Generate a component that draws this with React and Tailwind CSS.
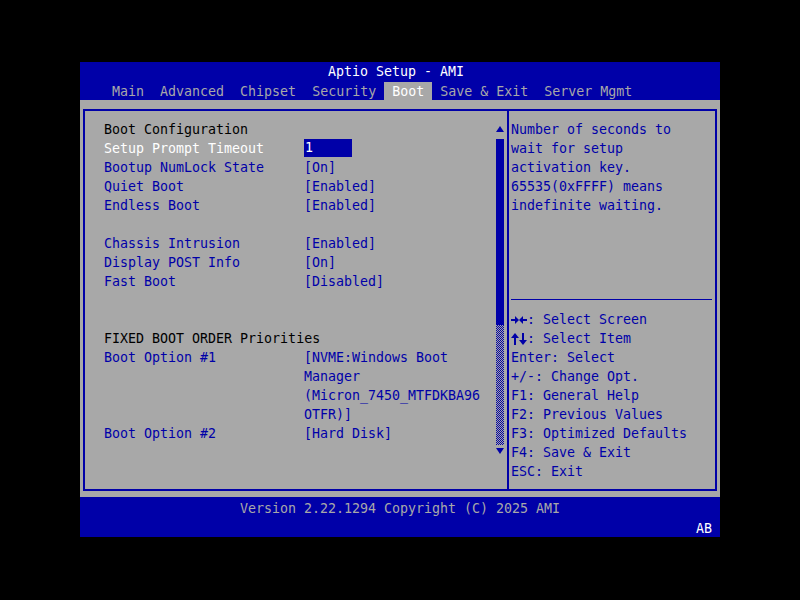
import React from "react";

const B = "#0000a8";

function Row({ label, value, labelClass = "text-[#0000a8]", valueNode }) {
  return (
    <div className="flex h-[19px] leading-[19px]">
      <div className={"w-[200px] whitespace-pre " + labelClass}>{label}</div>
      <div className="whitespace-pre text-[#0000a8]">{valueNode || value}</div>
    </div>
  );
}

function Blank() {
  return <div className="h-[19px]" />;
}

function LRArrows() {
  return (
    <svg width="16" height="19" viewBox="0 0 16 19" className="shrink-0">
      <rect x="0" y="9" width="5" height="2" fill={B} />
      <polygon points="4,6 8,10 4,14" fill={B} />
      <rect x="11" y="9" width="5" height="2" fill={B} />
      <polygon points="12,6 8,10 12,14" fill={B} />
    </svg>
  );
}

function UDArrows() {
  return (
    <svg width="16" height="19" viewBox="0 0 16 19" className="shrink-0">
      <polygon points="4,4 0,9 8,9" fill={B} />
      <rect x="3" y="8" width="2" height="8" fill={B} />
      <polygon points="12,16 8,11 16,11" fill={B} />
      <rect x="11" y="4" width="2" height="8" fill={B} />
    </svg>
  );
}

export default function App() {
  const tabs = ["Main", "Advanced", "Chipset", "Security", "Boot", "Save & Exit", "Server Mgmt"];
  return (
    <div className="w-[800px] h-[600px] bg-black pt-[62px] pl-[80px] font-['DejaVu_Sans_Mono',monospace] text-[13.3px]">
      <div className="w-[640px] h-[475px] flex flex-col">
        {/* Header */}
        <div className="bg-[#0000a8] h-[38px] shrink-0">
          <div className="h-[20px] leading-[20px] pl-[248px] text-white whitespace-pre">Aptio Setup - AMI</div>
          <div className="h-[18px] flex pl-[24px] leading-[20px]">
            {tabs.map((t) => (
              <div
                key={t}
                className={
                  "px-[8px] whitespace-pre " +
                  (t === "Boot" ? "bg-[#a8a8a8] text-white" : "text-[#a8a8a8]")
                }
              >
                {t}
              </div>
            ))}
          </div>
        </div>

        {/* Body */}
        <div className="bg-[#a8a8a8] h-[397px] pt-[9px] px-[3px] shrink-0">
          <div className="border-2 border-[#0000a8] h-[382px] flex">
            {/* Left pane */}
            <div className="w-[422px] flex shrink-0">
              <div className="flex-1 pl-[19px] pt-[9px]">
                <Row label="Boot Configuration" labelClass="text-black" value="" />
                <Row
                  label="Setup Prompt Timeout"
                  labelClass="text-white"
                  valueNode={
                    <div className="w-[48px] h-[18px] leading-[18px] bg-[#0000a8] text-white pl-[1px]">1</div>
                  }
                />
                <Row label="Bootup NumLock State" value="[On]" />
                <Row label="Quiet Boot" value="[Enabled]" />
                <Row label="Endless Boot" value="[Enabled]" />
                <Blank />
                <Row label="Chassis Intrusion" value="[Enabled]" />
                <Row label="Display POST Info" value="[On]" />
                <Row label="Fast Boot" value="[Disabled]" />
                <Blank />
                <Blank />
                <Row label="FIXED BOOT ORDER Priorities" labelClass="text-black whitespace-pre w-[300px]" value="" />
                <div className="flex leading-[19px]">
                  <div className="w-[200px] text-[#0000a8] whitespace-pre">Boot Option #1</div>
                  <div className="text-[#0000a8] whitespace-pre">
                    <div className="h-[19px]">[NVME:Windows Boot</div>
                    <div className="h-[19px]">Manager</div>
                    <div className="h-[19px]">(Micron_7450_MTFDKBA96</div>
                    <div className="h-[19px]">OTFR)]</div>
                  </div>
                </div>
                <Row label="Boot Option #2" value="[Hard Disk]" />
              </div>
              {/* Scrollbar */}
              <div className="w-[8px] mr-[3px] flex flex-col items-center">
                <svg className="mt-[15px]" width="8" height="6" viewBox="0 0 8 6">
                  <polygon points="4,0 8,6 0,6" fill={B} />
                </svg>
                <div className="mt-[7px] w-[8px] h-[186px] bg-[#0000a8]" />
                <div className="w-[8px] h-[120px] bg-[repeating-conic-gradient(#0000a8_0_25%,#a8a8a8_0_50%)] bg-[length:2px_2px]" />
                <svg className="mt-[3px]" width="8" height="6" viewBox="0 0 8 6">
                  <polygon points="0,0 8,0 4,6" fill={B} />
                </svg>
              </div>
            </div>
            {/* Divider */}
            <div className="w-[2px] bg-[#0000a8] shrink-0" />
            {/* Help pane */}
            <div className="flex-1 pl-[2px] pt-[9px] text-[#0000a8] leading-[19px] whitespace-pre">
              <div className="h-[19px]">Number of seconds to</div>
              <div className="h-[19px]">wait for setup</div>
              <div className="h-[19px]">activation key.</div>
              <div className="h-[19px]">65535(0xFFFF) means</div>
              <div className="h-[19px]">indefinite waiting.</div>
              <div className="h-[76px]" />
              <div className="h-[19px] flex items-center pr-[3px] -translate-y-[1px]">
                <div className="h-[1px] w-full bg-[#0000a8]" />
              </div>
              <div className="h-[19px] flex">
                <LRArrows />
                <span>: Select Screen</span>
              </div>
              <div className="h-[19px] flex">
                <UDArrows />
                <span>: Select Item</span>
              </div>
              <div className="h-[19px]">Enter: Select</div>
              <div className="h-[19px]">+/-: Change Opt.</div>
              <div className="h-[19px]">F1: General Help</div>
              <div className="h-[19px]">F2: Previous Values</div>
              <div className="h-[19px]">F3: Optimized Defaults</div>
              <div className="h-[19px]">F4: Save &amp; Exit</div>
              <div className="h-[19px]">ESC: Exit</div>
            </div>
          </div>
        </div>

        {/* Footer */}
        <div className="bg-[#0000a8] h-[40px] shrink-0 relative">
          <div className="h-[24px] leading-[24px] text-center text-[#a8a8a8] whitespace-pre">
            Version 2.22.1294 Copyright (C) 2025 AMI
          </div>
          <div className="h-[16px] leading-[16px] text-right pr-[8px] text-white">AB</div>
        </div>
      </div>
    </div>
  );
}
